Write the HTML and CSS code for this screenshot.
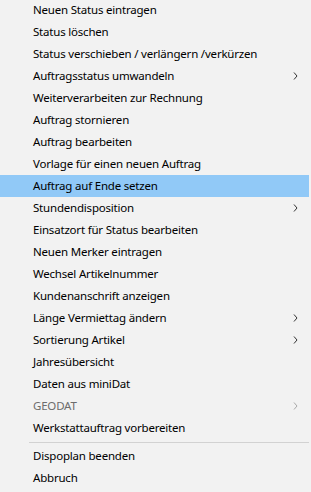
FILE: index.html
```html
<!DOCTYPE html>
<html lang="de">
<head>
<meta charset="utf-8">
<link rel="stylesheet" href="styles.css">
</head>
<body>
<ul class="menu">
  <li class="item"><span>Neuen Status eintragen</span></li>
  <li class="item"><span>Status löschen</span></li>
  <li class="item"><span>Status verschieben / verlängern /verkürzen</span></li>
  <li class="item sub"><span>Auftragsstatus umwandeln</span><svg class="chev" viewBox="0 0 5 8" width="5" height="8"><path d="M1 0.5 L4 4 L1 7.5" fill="none" stroke="currentColor" stroke-width="1"/></svg></li>
  <li class="item"><span>Weiterverarbeiten zur Rechnung</span></li>
  <li class="item"><span>Auftrag stornieren</span></li>
  <li class="item"><span>Auftrag bearbeiten</span></li>
  <li class="item"><span>Vorlage für einen neuen Auftrag</span></li>
  <li class="item active"><span>Auftrag auf Ende setzen</span></li>
  <li class="item sub"><span>Stundendisposition</span><svg class="chev" viewBox="0 0 5 8" width="5" height="8"><path d="M1 0.5 L4 4 L1 7.5" fill="none" stroke="currentColor" stroke-width="1"/></svg></li>
  <li class="item"><span>Einsatzort für Status bearbeiten</span></li>
  <li class="item"><span>Neuen Merker eintragen</span></li>
  <li class="item"><span>Wechsel Artikelnummer</span></li>
  <li class="item"><span>Kundenanschrift anzeigen</span></li>
  <li class="item sub"><span>Länge Vermiettag ändern</span><svg class="chev" viewBox="0 0 5 8" width="5" height="8"><path d="M1 0.5 L4 4 L1 7.5" fill="none" stroke="currentColor" stroke-width="1"/></svg></li>
  <li class="item sub"><span>Sortierung Artikel</span><svg class="chev" viewBox="0 0 5 8" width="5" height="8"><path d="M1 0.5 L4 4 L1 7.5" fill="none" stroke="currentColor" stroke-width="1"/></svg></li>
  <li class="item"><span>Jahresübersicht</span></li>
  <li class="item"><span>Daten aus miniDat</span></li>
  <li class="item sub disabled"><span>GEODAT</span><svg class="chev" viewBox="0 0 5 8" width="5" height="8"><path d="M1 0.5 L4 4 L1 7.5" fill="none" stroke="currentColor" stroke-width="1"/></svg></li>
  <li class="item"><span>Werkstattauftrag vorbereiten</span></li>
  <li class="sep"></li>
  <li class="item"><span>Dispoplan beenden</span></li>
  <li class="item"><span>Abbruch</span></li>
</ul>
</body>
</html>
```
FILE: styles.css
```css
html, body {
  margin: 0;
  padding: 0;
  background: #f2f2f2;
}
body {
  width: 311px;
  height: 492px;
  overflow: hidden;
  font-family: "Noto Sans", "Open Sans", sans-serif;
  font-size: 11.5px;
  letter-spacing: -0.2px;
  color: #000;
}
.menu {
  list-style: none;
  margin: -1px 0 0 0;
  padding: 0;
  width: 309px;
}
.item {
  height: 22px;
  box-sizing: border-box;
  display: flex;
  align-items: center;
  justify-content: space-between;
  padding: 0 11px 1px 33px;
  white-space: nowrap;
}
.item.active {
  background: #91c9f7;
}
.item.disabled {
  color: #6d6d6d;
}
.chev {
  color: #333;
  display: block;
  margin-top: 1px;
}
.disabled .chev {
  color: #a8a8a8;
}
.sep {
  height: 6px;
  display: flex;
  align-items: center;
  padding-left: 29px;
}
.sep::before {
  content: "";
  display: block;
  flex: 1;
  height: 1px;
  background: #d2d2d2;
}
```
